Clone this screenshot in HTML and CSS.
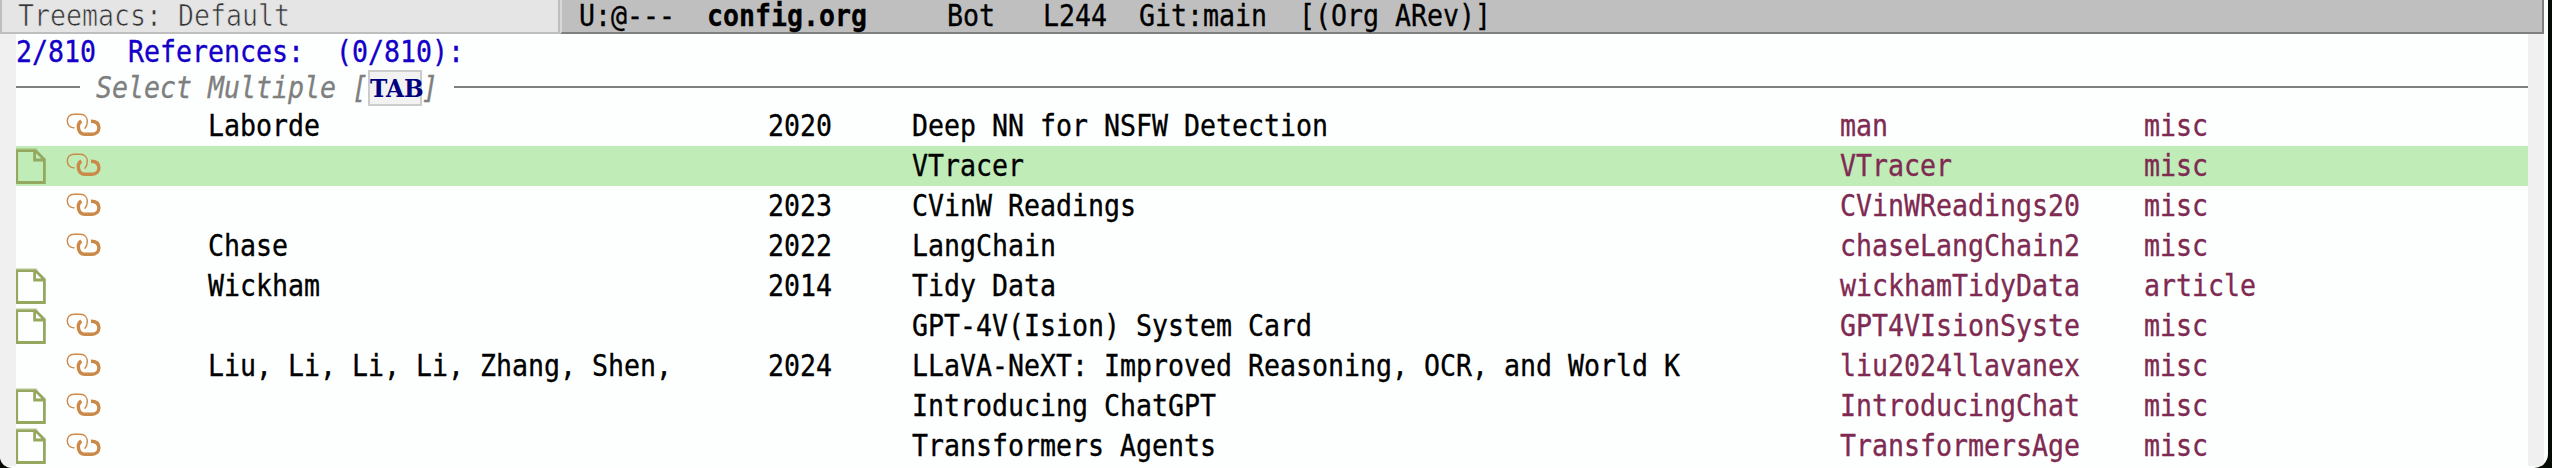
FILE: index.html
```html
<!DOCTYPE html>
<html lang="en">
<head>
<meta charset="utf-8">
<title>References</title>
<link rel="stylesheet" href="styles.css">
</head>
<body>
<svg class="defs" aria-hidden="true">
  <symbol id="file" viewBox="0 0 30 37">
    <path class="file-halo" d="M0 0.5H20.500L22 2"/>
    <path d="M0.700 2.700H19.500L28.400 11.600V34.500H0.700ZM18.600 2.700V12H28.400"/>
  </symbol>
  <symbol id="link" viewBox="0 0 36 24">
    <path class="thin" d="M8.6 14.9C3.8 15.2 1.3 11.500 1.3 8C1.300 4 4 1.200 8 1.200H14.500C18.800 1.200 21.300 4.500 21.300 8.500C21.300 11.500 20.500 13.800 18.600 15.800"/>
    <path class="thick" d="M15.300 8C12.300 10 12 13.500 12.600 16C13.300 19 15.500 21.200 18.500 21.200H26C30.500 21.200 32.900 18.300 32.900 14.700C32.900 11 30.500 8.200 25 8.200"/>
  </symbol>
</svg>
<div class="frame">
  <header class="modelines">
    <div class="modeline inactive"><span class="t">Treemacs: Default</span></div>
    <div class="modeline active"><span class="t">U:@---  <b>config.org</b>     Bot   L244  Git:main  [(Org ARev)]</span></div>
  </header>
  <main class="minibuffer">
    <div class="prompt"><span class="t">2/810  References:  (0/810):</span></div>
    <div class="group">
      <i class="rule short"></i>
      <div class="label"><span class="t">Select Multiple [</span></div>
      <kbd><span>TAB</span></kbd>
      <div class="close"><span class="t">]</span></div>
      <i class="rule"></i>
    </div>
    <div class="row"><div class="ic"></div><div class="ic"><svg class="link"><use href="#link"/></svg></div><div><span class="t">Laborde</span></div><div><span class="t">2020</span></div><div><span class="t">Deep NN for NSFW Detection</span></div><div class="key"><span class="t">man</span></div><div class="key"><span class="t">misc</span></div></div>
    <div class="row current"><div class="ic"><svg class="file"><use href="#file"/></svg></div><div class="ic"><svg class="link"><use href="#link"/></svg></div><div></div><div></div><div><span class="t">VTracer</span></div><div class="key"><span class="t">VTracer</span></div><div class="key"><span class="t">misc</span></div></div>
    <div class="row"><div class="ic"></div><div class="ic"><svg class="link"><use href="#link"/></svg></div><div></div><div><span class="t">2023</span></div><div><span class="t">CVinW Readings</span></div><div class="key"><span class="t">CVinWReadings20</span></div><div class="key"><span class="t">misc</span></div></div>
    <div class="row"><div class="ic"></div><div class="ic"><svg class="link"><use href="#link"/></svg></div><div><span class="t">Chase</span></div><div><span class="t">2022</span></div><div><span class="t">LangChain</span></div><div class="key"><span class="t">chaseLangChain2</span></div><div class="key"><span class="t">misc</span></div></div>
    <div class="row"><div class="ic"><svg class="file"><use href="#file"/></svg></div><div class="ic"></div><div><span class="t">Wickham</span></div><div><span class="t">2014</span></div><div><span class="t">Tidy Data</span></div><div class="key"><span class="t">wickhamTidyData</span></div><div class="key"><span class="t">article</span></div></div>
    <div class="row"><div class="ic"><svg class="file"><use href="#file"/></svg></div><div class="ic"><svg class="link"><use href="#link"/></svg></div><div></div><div></div><div><span class="t">GPT-4V(Ision) System Card</span></div><div class="key"><span class="t">GPT4VIsionSyste</span></div><div class="key"><span class="t">misc</span></div></div>
    <div class="row"><div class="ic"></div><div class="ic"><svg class="link"><use href="#link"/></svg></div><div><span class="t">Liu, Li, Li, Li, Zhang, Shen,</span></div><div><span class="t">2024</span></div><div><span class="t">LLaVA-NeXT: Improved Reasoning, OCR, and World K</span></div><div class="key"><span class="t">liu2024llavanex</span></div><div class="key"><span class="t">misc</span></div></div>
    <div class="row"><div class="ic"><svg class="file"><use href="#file"/></svg></div><div class="ic"><svg class="link"><use href="#link"/></svg></div><div></div><div></div><div><span class="t">Introducing ChatGPT</span></div><div class="key"><span class="t">IntroducingChat</span></div><div class="key"><span class="t">misc</span></div></div>
    <div class="row"><div class="ic"><svg class="file"><use href="#file"/></svg></div><div class="ic"><svg class="link"><use href="#link"/></svg></div><div></div><div></div><div><span class="t">Transformers Agents</span></div><div class="key"><span class="t">TransformersAge</span></div><div class="key"><span class="t">misc</span></div></div>
  </main>
</div>
</body>
</html>
```
FILE: styles.css
```css
* { box-sizing: border-box; }
html, body { margin: 0; height: 468px; overflow: hidden; background: #050a04; }
body { font: 30px/40px "DejaVu Sans Mono", monospace; color: #000; }
.defs { display: none; }

.frame {
  width: 2548px;
  height: 468px;
  padding-right: 4px;
  background: #fdfffe;
  border-radius: 0 0 14px 12px;
  overflow: hidden;
}

/* Monospaced cells are 16px wide */
.t {
  display: inline-block;
  white-space: pre;
  transform: scaleX(0.88586);
  transform-origin: 0 50%;
  -webkit-text-stroke: 0.35px currentColor;
}

.modelines { display: flex; height: 34px; line-height: 31px; }
.modeline { white-space: nowrap; }
.inactive {
  width: 560px;
  padding-left: 16px;
  background: #e5e5e5;
  color: #333;
  border: solid #bebebe;
  border-width: 0 2px 2px 2px;
}
.inactive .t { -webkit-text-stroke: 0.7px #e5e5e5; }
.active {
  flex: 1;
  padding-left: 17px;
  background: #bfbfbf;
  border: solid #7f7f7f;
  border-width: 0 2px 2px 2px;
  border-left-color: #d8d8d8;
}

.minibuffer {
  height: 432px;
  border: solid #f0f0f0;
  border-width: 0 16px;
}
.prompt { height: 36px; line-height: 35px; color: #1400c8; }

.group {
  display: flex;
  align-items: center;
  height: 36px;
  line-height: 35px;
  color: #7f7f7f;
  font-style: italic;
}
.rule { flex: 1; height: 2px; margin: 0 0 2px 16px; background: #7f7f7f; }
.rule.short { flex: none; width: 64px; margin: 0 16px 2px 0; }
.label { width: 272px; height: 36px; white-space: nowrap; }
.close { width: 16px; height: 36px; }
kbd {
  width: 54px;
  height: 36px;
  border: 2px solid #ccc;
  background: #f2f2f2;
  color: #00007f;
  font: bold 23.5px/35px "DejaVu Serif", serif;
}
kbd span { display: inline-block; transform: scaleX(0.99); transform-origin: 0 50%; }

.row {
  display: grid;
  grid-template-columns: 50px 142px 560px 144px 928px 304px 1fr;
  height: 40px;
  line-height: 39px;
}
.row > div { height: 40px; white-space: nowrap; min-width: 0; }
.current { background: #bfecb7; }
.key { color: #7f2a52; }

.ic svg { display: block; fill: none; stroke-width: 2.8; }
.file { width: 30px; height: 37px; margin-top: 2px; stroke: #94a85f; }
.file-halo { stroke-width: 1; opacity: 0.35; }
.link { width: 36px; height: 24px; margin-top: 7px; stroke: #cb8a49; }
.thin { stroke-width: 1.4; }
.thick { stroke-width: 3.4; }
```
